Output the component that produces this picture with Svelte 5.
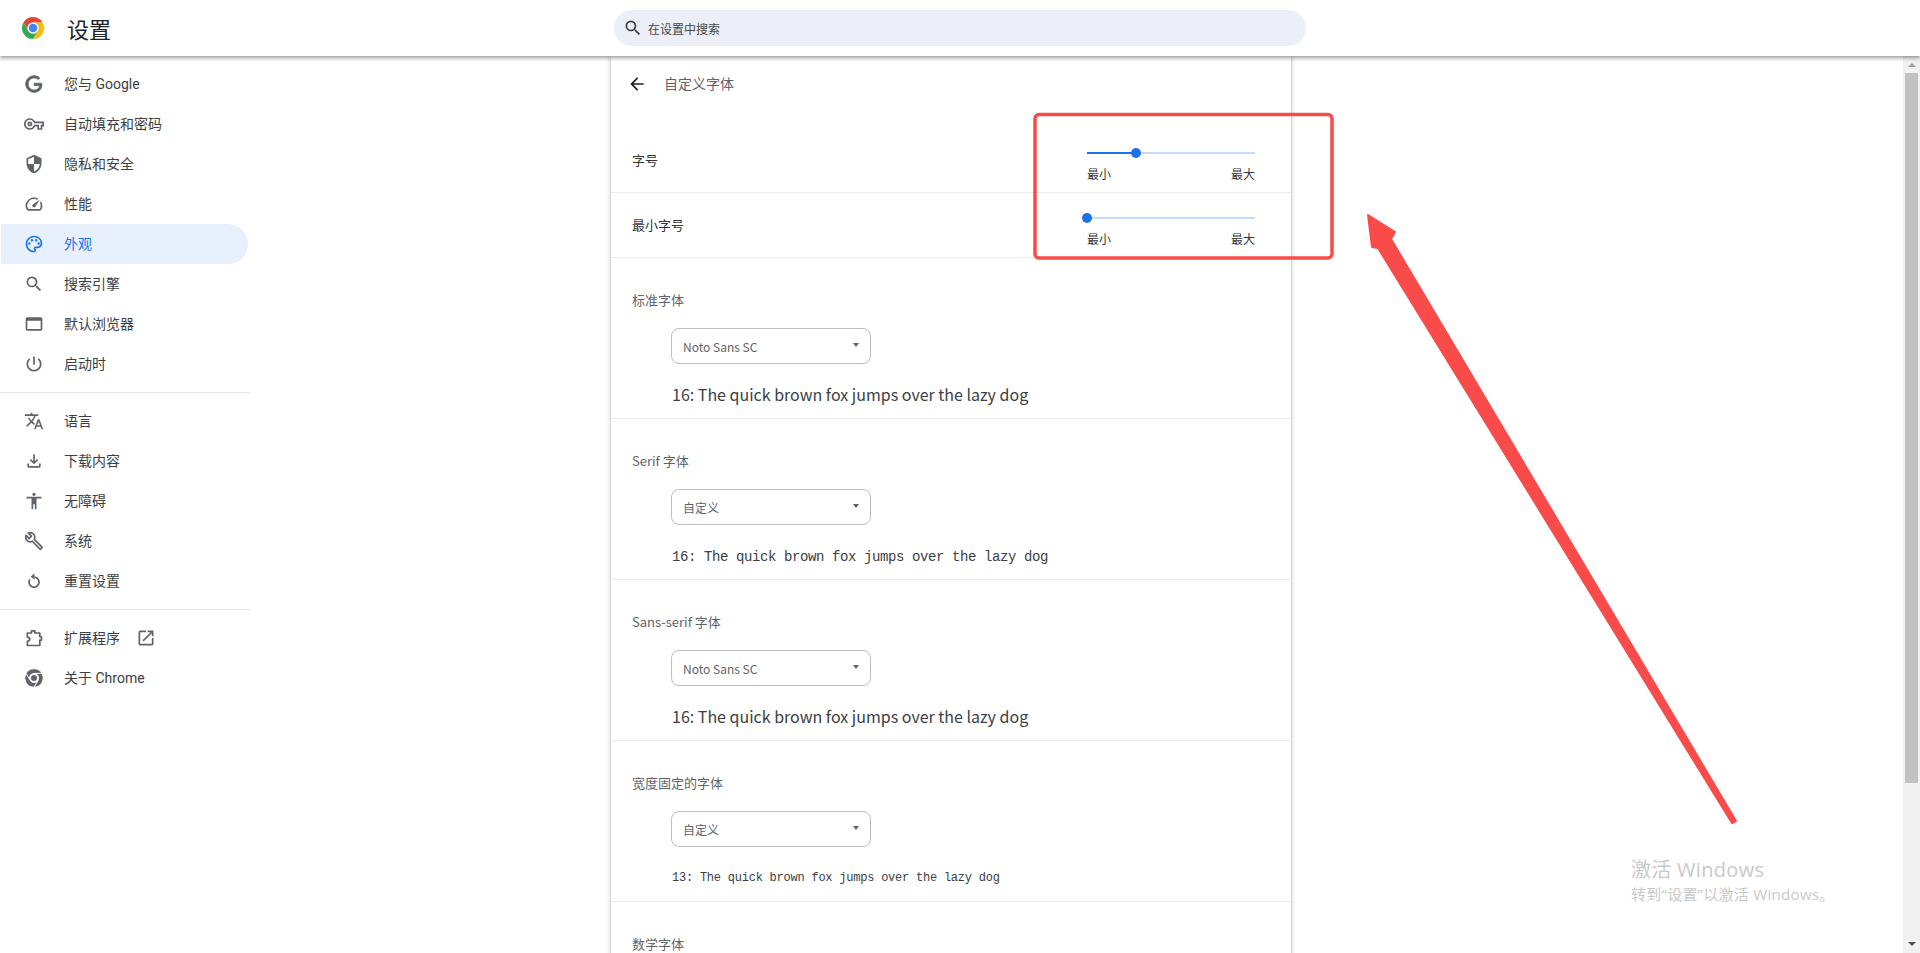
<script>
  const icons = {
    google: "M21.35 11.1h-9.17v2.73h6.51c-.33 3.81-3.5 5.44-6.5 5.44C8.36 19.27 5 16.25 5 12c0-4.1 3.2-7.27 7.2-7.27 3.09 0 4.9 1.97 4.9 1.97L19 4.72S16.56 2 12.1 2C6.42 2 2 6.8 2 12c0 5.05 4.13 10 10.22 10 5.35 0 9.25-3.67 9.25-9.09 0-1.15-.12-1.81-.12-1.81z",
    key: "M22 19h-6v-4h-2.68c-1.14 2.42-3.6 4-6.32 4-3.86 0-7-3.14-7-7s3.14-7 7-7c2.72 0 5.17 1.58 6.32 4H24v6h-2v4zm-4-2h2v-4h2v-2H11.94l-.23-.67C11.01 8.34 9.11 7 7 7c-2.76 0-5 2.24-5 5s2.24 5 5 5c2.11 0 4.01-1.34 4.71-3.33l.23-.67H18v4zM7 15c-1.65 0-3-1.35-3-3s1.35-3 3-3 3 1.35 3 3-1.35 3-3 3zm0-4c-.55 0-1 .45-1 1s.45 1 1 1 1-.45 1-1-.45-1-1-1z",
    shield: "M12 1L3 5v6c0 5.55 3.84 10.74 9 12 5.16-1.26 9-6.45 9-12V5l-9-4zm0 10.99h7c-.53 4.12-3.28 7.79-7 8.94V12H5V6.3l7-3.11v8.8z",
    speed: "M20.38 8.57l-1.23 1.85a8 8 0 0 1-.22 7.58H5.07A8 8 0 0 1 15.58 6.85l1.85-1.23A10 10 0 0 0 3.35 19a2 2 0 0 0 1.72 1h13.85a2 2 0 0 0 1.74-1 10 10 0 0 0-.27-10.44zm-9.79 6.84a2 2 0 0 0 2.83 0l5.66-8.49-8.49 5.66a2 2 0 0 0 0 2.83z",
    palette: "M12 22C6.49 22 2 17.51 2 12S6.49 2 12 2s10 4.04 10 9c0 3.31-2.69 6-6 6h-1.77c-.28 0-.5.22-.5.5 0 .12.05.23.13.33.41.47.64 1.06.64 1.67A2.5 2.5 0 0 1 12 22zm0-18c-4.41 0-8 3.59-8 8s3.59 8 8 8c.28 0 .5-.22.5-.5a.54.54 0 0 0-.14-.35c-.41-.46-.63-1.05-.63-1.65a2.5 2.5 0 0 1 2.5-2.5H16c2.21 0 4-1.79 4-4 0-3.86-3.59-7-8-7zM6.5 10a1.5 1.5 0 1 0 0 3 1.5 1.5 0 0 0 0-3zm3-4a1.5 1.5 0 1 0 0 3 1.5 1.5 0 0 0 0-3zm5 0a1.5 1.5 0 1 0 0 3 1.5 1.5 0 0 0 0-3zm3 4a1.5 1.5 0 1 0 0 3 1.5 1.5 0 0 0 0-3z",
    search: "M15.5 14h-.79l-.28-.27A6.471 6.471 0 0 0 16 9.5 6.5 6.5 0 1 0 9.5 16c1.61 0 3.09-.59 4.23-1.57l.27.28v.79l5 4.99L20.49 19l-4.99-5zm-6 0C7.01 14 5 11.99 5 9.5S7.01 5 9.5 5 14 7.01 14 9.5 11.99 14 9.5 14z",
    browser: "M20 4H4c-1.11 0-2 .9-2 2v12c0 1.1.89 2 2 2h16c1.1 0 2-.9 2-2V6c0-1.1-.89-2-2-2zm0 14H4V8h16v10z",
    power: "M13 3h-2v10h2V3zm4.83 2.17l-1.42 1.42C17.99 7.86 19 9.81 19 12c0 3.87-3.13 7-7 7s-7-3.13-7-7c0-2.19 1.01-4.14 2.58-5.42L6.17 5.17C4.23 6.82 3 9.26 3 12c0 4.97 4.03 9 9 9s9-4.03 9-9c0-2.74-1.23-5.18-3.17-6.83z",
    translate: "M12.87 15.07l-2.54-2.51.03-.03c1.74-1.94 2.98-4.17 3.71-6.53H17V4h-7V2H8v2H1v1.99h11.17C11.5 7.92 10.44 9.75 9 11.35 8.07 10.32 7.3 9.19 6.69 8h-2c.73 1.63 1.73 3.17 2.98 4.56l-5.09 5.02L4 19l5-5 3.11 3.11.76-2.04zM18.5 10h-2L12 22h2l1.12-3h4.75L21 22h2l-4.5-12zm-2.62 7l1.62-4.33L19.12 17h-3.24z",
    download: "M18 15v3H6v-3H4v3c0 1.1.9 2 2 2h12c1.1 0 2-.9 2-2v-3h-2zm-1-4l-1.41-1.41L13 12.17V4h-2v8.17L8.41 9.59 7 11l5 5 5-5z",
    access: "M12 2c1.1 0 2 .9 2 2s-.9 2-2 2-2-.9-2-2 .9-2 2-2zm9 7h-6v13h-2v-6h-2v6H9V9H3V7h18v2z",
    wrench: "M22.61 18.99l-9.08-9.08c.93-2.34.45-5.1-1.44-7C9.79.61 6.21.4 3.66 2.25L7.5 6.1 6.08 7.5 2.25 3.69C.39 6.23.6 9.82 2.9 12.11c1.86 1.86 4.57 2.35 6.89 1.48l9.11 9.11c.39.39 1.02.39 1.41 0l2.3-2.3c.4-.38.4-1.01 0-1.41zm-3 1.6l-9.46-9.46c-.61.45-1.29.72-2 .82-1.36.2-2.79-.21-3.83-1.25C3.37 9.76 2.93 8.5 3 7.26l3.09 3.09 4.24-4.24-3.09-3.09c1.24-.07 2.49.37 3.44 1.31 1.08 1.08 1.49 2.57 1.24 3.96-.12.71-.42 1.37-.88 1.96l9.45 9.45-.88.88z",
    restore: "M12.5 3l-4.5 3.7 4.5 3.7zM12 6.3c3.9 0 7 3.1 7 7s-3.1 7.2-7 7.2-7-3.2-7-7.2c0-1.4.4-2.7 1.1-3.8l1.7 1.1c-.5.8-.8 1.7-.8 2.7 0 2.8 2.2 5.2 5 5.2s5-2.4 5-5.2-2.2-5-5-5z",
    open: "M19 19H5V5h7V3H5c-1.11 0-2 .9-2 2v14c0 1.1.89 2 2 2h14c1.1 0 2-.9 2-2v-7h-2v7zM14 3v2h3.59l-9.83 9.83 1.41 1.41L19 6.41V10h2V3h-7z",
    back: "M20 11H7.83l5.59-5.59L12 4l-8 8 8 8 1.41-1.41L7.83 13H20v-2z",
  };

  const extensionOutline = "M4 6H9V3.5H13V6H19V10.5H21V14.5H19V21H4V16C6.5 15.5 7 14.5 7 13.5C7 12.5 6.5 11.5 4 11Z";
  const chromeBlade = "M2.47 6.5A11 11 0 0 1 21.53 6.5H12A5.5 5.5 0 0 0 7.24 14.75Z";

  const navGroups = [
    [
      { icon: "google", label: "您与 Google" },
      { icon: "key", label: "自动填充和密码" },
      { icon: "shield", label: "隐私和安全" },
      { icon: "speed", label: "性能" },
      { icon: "palette", label: "外观", active: true },
      { icon: "search", label: "搜索引擎" },
      { icon: "browser", label: "默认浏览器" },
      { icon: "power", label: "启动时" },
    ],
    [
      { icon: "translate", label: "语言" },
      { icon: "download", label: "下载内容" },
      { icon: "access", label: "无障碍" },
      { icon: "wrench", label: "系统" },
      { icon: "restore", label: "重置设置" },
    ],
    [
      { icon: "extension", label: "扩展程序", external: true },
      { icon: "chrome", label: "关于 Chrome" },
    ],
  ];

  const sliders = [
    { label: "字号", value: 29 },
    { label: "最小字号", value: 0 },
  ];

  const fonts = [
    { label: "标准字体", select: "Noto Sans SC", sample: "16: The quick brown fox jumps over the lazy dog", kind: "sans" },
    { label: "Serif 字体", select: "自定义", sample: "16: The quick brown fox jumps over the lazy dog", kind: "mono16" },
    { label: "Sans-serif 字体", select: "Noto Sans SC", sample: "16: The quick brown fox jumps over the lazy dog", kind: "sans" },
    { label: "宽度固定的字体", select: "自定义", sample: "13: The quick brown fox jumps over the lazy dog", kind: "mono13" },
  ];
</script>

<div class="page">
  <header class="topbar">
    <div class="brand">
      <svg class="logo" viewBox="0 0 24 24" width="24" height="24" aria-hidden="true">
        <path d={chromeBlade} fill="#ea4335" />
        <path d={chromeBlade} fill="#fbbc04" transform="rotate(120 12 12)" />
        <path d={chromeBlade} fill="#34a853" transform="rotate(240 12 12)" />
        <circle cx="12" cy="12" r="5.5" fill="#fff" />
        <circle cx="12" cy="12" r="4.3" fill="#4285f4" />
      </svg>
      <h1>设置</h1>
    </div>
    <div class="search">
      <svg viewBox="0 0 24 24" width="20" height="20" aria-hidden="true"><path d={icons.search} fill="#3c4043" /></svg>
      <span>在设置中搜索</span>
    </div>
  </header>

  <div class="body">
    <div class="content">
      <nav class="sidebar">
        {#each navGroups as group, g}
          {#if g > 0}<hr />{/if}
          {#each group as item}
            <div class="nav-item" class:active={item.active}>
              <svg viewBox="0 0 24 24" width="20" height="20" aria-hidden="true">
                {#if item.icon === "chrome"}
                  <g fill="currentColor" stroke="#fff" stroke-width="0.9">
                    <path d={chromeBlade} />
                    <path d={chromeBlade} transform="rotate(120 12 12)" />
                    <path d={chromeBlade} transform="rotate(240 12 12)" />
                  </g>
                  <circle cx="12" cy="12" r="3.6" fill="currentColor" />
                {:else if item.icon === "extension"}
                  <path d={extensionOutline} fill="none" stroke="currentColor" stroke-width="2" stroke-linejoin="round" />
                {:else if item.icon === "google"}
                  <path d={icons.google} fill="currentColor" stroke="currentColor" stroke-width="0.9" />
                {:else}
                  <path d={icons[item.icon]} fill="currentColor" />
                {/if}
              </svg>
              <span>{item.label}</span>
              {#if item.external}
                <svg class="external" viewBox="0 0 24 24" width="20" height="20" aria-hidden="true"><path d={icons.open} fill="currentColor" /></svg>
              {/if}
            </div>
          {/each}
        {/each}
      </nav>

      <main class="panel">
        <div class="subpage-head">
          <svg viewBox="0 0 24 24" width="20" height="20" aria-hidden="true"><path d={icons.back} fill="#202124" /></svg>
          <span>自定义字体</span>
        </div>

        {#each sliders as s}
          <div class="slider-row">
            <span class="row-label">{s.label}</span>
            <div class="slider">
              <div class="track">
                <div class="fill" style="width: {s.value}%"></div>
                <div class="thumb" style="left: {s.value}%"></div>
              </div>
              <div class="ends"><span>最小</span><span>最大</span></div>
            </div>
          </div>
        {/each}

        {#each fonts as f}
          <section class="font-block">
            <div class="font-label">{f.label}</div>
            <div class="select">
              <span>{f.select}</span>
              <i class="caret"></i>
            </div>
            <div class="sample {f.kind}">{f.sample}</div>
          </section>
        {/each}

        <section class="font-block">
          <div class="font-label">数学字体</div>
        </section>
      </main>
    </div>

    <aside class="scrollbar">
      <i class="sb-up"></i>
      <div class="sb-thumb"></div>
      <i class="sb-down"></i>
    </aside>
  </div>

  <!-- screenshot annotation drawn on top of the page -->
  <svg class="annotation" width="1920" height="953" viewBox="0 0 1920 953" aria-hidden="true">
    <rect x="1035" y="114.5" width="297" height="143.5" rx="4" fill="none" stroke="#fa4b4b" stroke-width="3.5" />
    <polygon
      points="1368,215 1395,232 1391,239 1736,821 1732,823 1378,248 1372,247"
      fill="#fa4b4b"
      stroke="#fa4b4b"
      stroke-width="2"
      stroke-linejoin="round"
    />
  </svg>

  <div class="watermark">
    <div class="wm-title">激活 Windows</div>
    <div class="wm-sub">转到“设置”以激活 Windows。</div>
  </div>
</div>

<style>
  :global(body) {
    margin: 0;
    overflow: hidden;
    background: #fff;
  }

  .page {
    position: relative;
    display: flex;
    flex-direction: column;
    height: 953px;
    overflow: hidden;
    font-family: Roboto, "Noto Sans CJK SC", sans-serif;
    font-size: 14px;
    color: #202124;
  }

  .topbar {
    position: relative;
    z-index: 2;
    flex: none;
    display: grid;
    grid-template-columns: 614px 692px 1fr;
    align-items: center;
    height: 56px;
    background: #fff;
    box-shadow: 0 2px 4px rgba(0, 0, 0, 0.4);
  }

  .brand {
    display: flex;
    align-items: center;
    padding-left: 21px;
    gap: 22px;
  }

  .brand h1 {
    margin: 0;
    font-size: 22px;
    font-weight: 400;
    color: #202124;
  }

  .search {
    display: flex;
    align-items: center;
    gap: 5px;
    height: 36px;
    padding-left: 9px;
    border-radius: 18px;
    background: #eceff7;
    font-size: 12px;
    color: #444746;
  }

  .body {
    flex: 1;
    display: flex;
    min-height: 0;
  }

  .content {
    flex: 1;
    display: grid;
    grid-template-columns: 611px 680px 1fr;
    min-width: 0;
  }

  .sidebar {
    padding-top: 8px;
  }

  .sidebar hr {
    width: 250px;
    height: 1px;
    margin: 8px 0;
    border: 0;
    background: #e6e6e6;
  }

  .nav-item {
    display: flex;
    align-items: center;
    width: 247px;
    height: 40px;
    margin-left: 1px;
    padding-left: 23px;
    box-sizing: border-box;
    border-radius: 0 20px 20px 0;
    color: #5f6368;
  }

  .nav-item span {
    margin-left: 20px;
    padding-bottom: 2px;
    color: #3c4043;
  }

  .nav-item.active {
    background: #e8f0fe;
    color: #1a73e8;
  }

  .nav-item.active span {
    color: #1a73e8;
  }

  .external {
    margin-left: 16px;
  }

  .panel {
    background: #fff;
    box-shadow: 0 0 4px rgba(60, 64, 67, 0.45);
  }

  .subpage-head {
    display: flex;
    align-items: center;
    gap: 17px;
    height: 56px;
    margin-bottom: 16px;
    padding-left: 16px;
    color: #5f6368;
  }

  .subpage-head span {
    padding-bottom: 2px;
  }

  .slider-row {
    display: flex;
    justify-content: space-between;
    align-items: center;
    height: 64px;
    padding: 0 36px 0 21px;
    border-bottom: 1px solid #ebebeb;
  }

  .row-label {
    padding-bottom: 2px;
    font-size: 13px;
    color: #333;
  }

  .slider {
    align-self: stretch;
    width: 168px;
    padding-top: 24px;
    box-sizing: border-box;
  }

  .track {
    position: relative;
    height: 2px;
    background: #c6dafc;
  }

  .fill {
    height: 100%;
    background: #1a73e8;
  }

  .thumb {
    position: absolute;
    top: -4px;
    width: 10px;
    height: 10px;
    margin-left: -5px;
    border-radius: 50%;
    background: #1a73e8;
  }

  .ends {
    display: flex;
    justify-content: space-between;
    margin-top: 13px;
    font-size: 12px;
    line-height: 16px;
    color: #333;
  }

  .font-block {
    padding: 32px 0 11px;
    border-bottom: 1px solid #ebebeb;
  }

  .font-label {
    padding-left: 21px;
    font-family: "Noto Sans CJK SC", sans-serif;
    font-size: 13px;
    line-height: 20px;
    color: #5f6368;
  }

  .select {
    display: flex;
    justify-content: space-between;
    align-items: center;
    width: 200px;
    height: 36px;
    margin: 18px 0 0 60px;
    padding: 0 11px;
    box-sizing: border-box;
    border: 1px solid #bdbdbd;
    border-radius: 8px;
    font-family: "Noto Sans CJK SC", sans-serif;
    font-size: 12px;
    color: #5f6368;
  }

  .caret {
    width: 0;
    height: 0;
    border-left: 3.5px solid transparent;
    border-right: 3.5px solid transparent;
    border-top: 4px solid #5f6368;
    margin-bottom: 2px;
  }

  .sample {
    height: 24px;
    margin: 19px 0 0 61px;
    line-height: 24px;
    white-space: nowrap;
    color: #3c4043;
  }

  .sample.sans {
    height: 25px;
    margin-top: 18px;
    font-family: "Noto Sans CJK SC", sans-serif;
    font-size: 16px;
    font-weight: 400;
  }

  .sample.mono16 {
    height: 23px;
    margin-top: 20px;
    font-family: "Liberation Mono", monospace;
    font-size: 14px;
    letter-spacing: -0.4px;
  }

  .sample.mono13 {
    font-family: "Liberation Mono", monospace;
    font-size: 12px;
    letter-spacing: -0.23px;
  }

  .scrollbar {
    position: relative;
    flex: none;
    display: flex;
    flex-direction: column;
    align-items: center;
    width: 17px;
    background: #f1f1f1;
  }

  .sb-up {
    flex: none;
    width: 0;
    height: 0;
    margin: 7px 0 6px;
    border-left: 4px solid transparent;
    border-right: 4px solid transparent;
    border-bottom: 4px solid #a3a3a3;
  }

  .sb-thumb {
    flex: none;
    width: 13px;
    height: 710px;
    background: #c1c1c1;
  }

  .sb-down {
    flex: none;
    width: 0;
    height: 0;
    margin-top: auto;
    margin-bottom: 7px;
    border-left: 4px solid transparent;
    border-right: 4px solid transparent;
    border-top: 4px solid #505050;
  }

  .annotation {
    position: absolute;
    top: 0;
    left: 0;
    z-index: 3;
    pointer-events: none;
  }

  .watermark {
    position: absolute;
    top: 855px;
    left: 1631px;
    z-index: 3;
    font-family: "Open Sans", "Noto Sans CJK SC", sans-serif;
    color: #c9c9c9;
  }

  .wm-title {
    font-size: 20px;
    line-height: 30px;
    letter-spacing: 0.3px;
  }

  .wm-sub {
    font-size: 15px;
    line-height: 18px;
    letter-spacing: 0.3px;
  }
</style>
